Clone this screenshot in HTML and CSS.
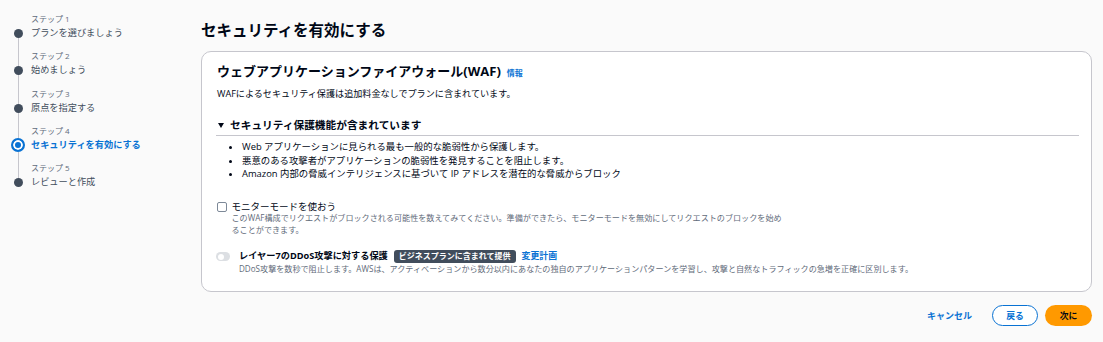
FILE: index.html
```html
<!DOCTYPE html>
<html lang="ja">
<head>
<meta charset="utf-8">
<title>セキュリティを有効にする</title>
<link rel="stylesheet" href="styles.css">
</head>
<body>
<div class="page">
  <nav class="steps">
    <div class="step">
      <div class="marker"><span class="dot"></span></div>
      <div class="step-text"><div class="step-num">ステップ 1</div><div class="step-title">プランを選びましょう</div></div>
    </div>
    <div class="step">
      <div class="marker"><span class="dot"></span></div>
      <div class="step-text"><div class="step-num">ステップ 2</div><div class="step-title">始めましょう</div></div>
    </div>
    <div class="step">
      <div class="marker"><span class="dot"></span></div>
      <div class="step-text"><div class="step-num">ステップ 3</div><div class="step-title">原点を指定する</div></div>
    </div>
    <div class="step current">
      <div class="marker"><span class="dot"></span></div>
      <div class="step-text"><div class="step-num">ステップ 4</div><div class="step-title">セキュリティを有効にする</div></div>
    </div>
    <div class="step">
      <div class="marker"><span class="dot"></span></div>
      <div class="step-text"><div class="step-num">ステップ 5</div><div class="step-title">レビューと作成</div></div>
    </div>
  </nav>

  <main class="main">
    <h1 class="page-title">セキュリティを有効にする</h1>

    <section class="card">
      <h2 class="card-title">ウェブアプリケーションファイアウォール(WAF)<a class="info" href="#">情報</a></h2>
      <p class="card-desc">WAFによるセキュリティ保護は追加料金なしでプランに含まれています。</p>

      <div class="expand">
        <div class="expand-head"><span class="caret"></span>セキュリティ保護機能が含まれています</div>
        <ul class="features">
          <li>Web アプリケーションに見られる最も一般的な脆弱性から保護します。</li>
          <li>悪意のある攻撃者がアプリケーションの脆弱性を発見することを阻止します。</li>
          <li>Amazon 内部の脅威インテリジェンスに基づいて IP アドレスを潜在的な脅威からブロック</li>
        </ul>
      </div>

      <div class="option check-option">
        <span class="checkbox"></span>
        <div class="option-body">
          <div class="option-label">モニターモードを使おう</div>
          <div class="option-desc wrap">このWAF構成でリクエストがブロックされる可能性を数えてみてください。準備ができたら、モニターモードを無効にしてリクエストのブロックを始めることができます。</div>
        </div>
      </div>

      <div class="option toggle-option">
        <span class="toggle"><span class="knob"></span></span>
        <div class="option-body">
          <div class="option-label strong">レイヤー7のDDoS攻撃に対する保護<span class="badge">ビジネスプランに含まれて提供</span><a class="link" href="#">変更計画</a></div>
          <div class="option-desc">DDoS攻撃を数秒で阻止します。AWSは、アクティベーションから数分以内にあなたの独自のアプリケーションパターンを学習し、攻撃と自然なトラフィックの急増を正確に区別します。</div>
        </div>
      </div>
    </section>

    <div class="actions">
      <a class="cancel" href="#">キャンセル</a>
      <button class="btn back">戻る</button>
      <button class="btn next">次に</button>
    </div>
  </main>
</div>
</body>
</html>
```

FILE: styles.css
```css
body {
  margin: 0;
  background: #fafafa;
  color: #000716;
  font-family: "Open Sans", "Noto Sans CJK JP", sans-serif;
}

.page {
  display: flex;
}

/* left step list */
.steps {
  width: 190px;
  padding: 13px 0 0 11px;
}
.step {
  display: flex;
  gap: 6px;
}
.marker {
  width: 14px;
  display: flex;
  flex-direction: column;
  align-items: center;
}
.marker::before,
.marker::after {
  content: "";
  width: 1px;
  background: #c6c6cd;
}
.marker::before {
  height: 16px;
}
.marker::after {
  flex: 1;
}
.step:first-child .marker::before,
.step:last-child .marker::after {
  background: transparent;
}
.dot {
  width: 9px;
  height: 9px;
  border-radius: 50%;
  background: #414d5c;
}
.step.current .marker::before {
  height: 13.5px;
}
.step.current .dot {
  width: 10px;
  height: 10px;
  border: 2px solid #0972d3;
  background: #0972d3;
  box-shadow: inset 0 0 0 2px #fff;
}
.step-text {
  padding-bottom: 11.3px;
}
.step-num {
  font-size: 8px;
  line-height: 12px;
  color: #5f6b7a;
}
.step-title {
  font-size: 9.2px;
  line-height: 15px;
  color: #414d5c;
}
.step.current .step-title {
  color: #0972d3;
  font-weight: 700;
}
.step-text {
  padding-bottom: 10.3px;
}

/* main column */
.main {
  flex: 1;
  padding: 20px 11px 0 0;
}
.page-title {
  margin: 0;
  font-size: 15.5px;
  line-height: 20px;
  font-weight: 700;
}

.card {
  margin-top: 11px;
  background: #fff;
  border: 1px solid #c6c6cd;
  border-radius: 10px;
  padding: 10px 12px 16px 15px;
}
.card-title {
  margin: 0;
  font-size: 13px;
  line-height: 18px;
  font-weight: 700;
}
.info {
  margin-left: 6px;
  font-size: 8px;
  color: #0972d3;
  text-decoration: none;
}
.card-desc {
  margin: 4.5px 0 0;
  font-size: 9.1px;
  line-height: 14px;
}

.expand {
  margin-top: 17.5px;
}
.expand-head {
  display: flex;
  align-items: center;
  font-size: 10.7px;
  line-height: 15px;
  font-weight: 700;
  padding-bottom: 2px;
  border-bottom: 1px solid #c6c6cd;
  margin-left: -1px;
  padding-left: 1px;
}
.caret {
  width: 0;
  height: 0;
  border-left: 3px solid transparent;
  border-right: 3px solid transparent;
  border-top: 5px solid #000716;
  margin: 0 6px 0 1px;
}
.features {
  margin: 4px 0 0;
  padding-left: 25px;
  font-size: 9.4px;
  line-height: 13.5px;
}

.option {
  display: flex;
  align-items: flex-start;
}
.option-label {
  font-size: 9.5px;
  line-height: 11px;
  display: flex;
  align-items: center;
}
.option-desc {
  font-size: 8.1px;
  line-height: 12px;
  color: #5f6b7a;
}
.option-desc.wrap {
  max-width: 552px;
}

.check-option {
  margin-top: 20.5px;
  gap: 4.5px;
}
.checkbox {
  width: 10px;
  height: 10px;
  margin-top: 1px;
  box-sizing: border-box;
  border: 1px solid #7d8998;
  border-radius: 2px;
  background: #fff;
}

.toggle-option {
  margin-top: 14px;
  margin-left: -1px;
  gap: 9px;
}
.toggle {
  width: 14px;
  height: 9px;
  margin-top: 2px;
  padding: 1.5px;
  box-sizing: border-box;
  border-radius: 5px;
  background: #dcdfe3;
  display: flex;
}
.knob {
  width: 6px;
  height: 6px;
  border-radius: 50%;
  background: #fff;
}
.option-label.strong {
  font-weight: 700;
  font-size: 9.2px;
  line-height: 12px;
}
.badge {
  margin-left: 6px;
  padding: 0 5px;
  height: 12.5px;
  line-height: 12.5px;
  border-radius: 3px;
  background: #414d5c;
  color: #fff;
  font-size: 8px;
}
.link {
  margin-left: 6px;
  color: #0972d3;
  font-size: 8.9px;
  text-decoration: none;
}

/* footer buttons */
.actions {
  margin-top: 13px;
  display: flex;
  justify-content: flex-end;
  align-items: center;
  gap: 7px;
}
.cancel {
  margin-right: 13px;
  color: #0972d3;
  font-size: 9px;
  font-weight: 700;
  text-decoration: none;
}
.btn {
  height: 21px;
  width: 47px;
  border-radius: 11px;
  font-family: inherit;
  font-size: 8.8px;
  font-weight: 700;
  padding: 0;
  color: #000716;
}
.back {
  width: 46px;
  background: #fff;
  border: 1.5px solid #0972d3;
  color: #0972d3;
}
.next {
  background: #ff9900;
  border: none;
}
```
